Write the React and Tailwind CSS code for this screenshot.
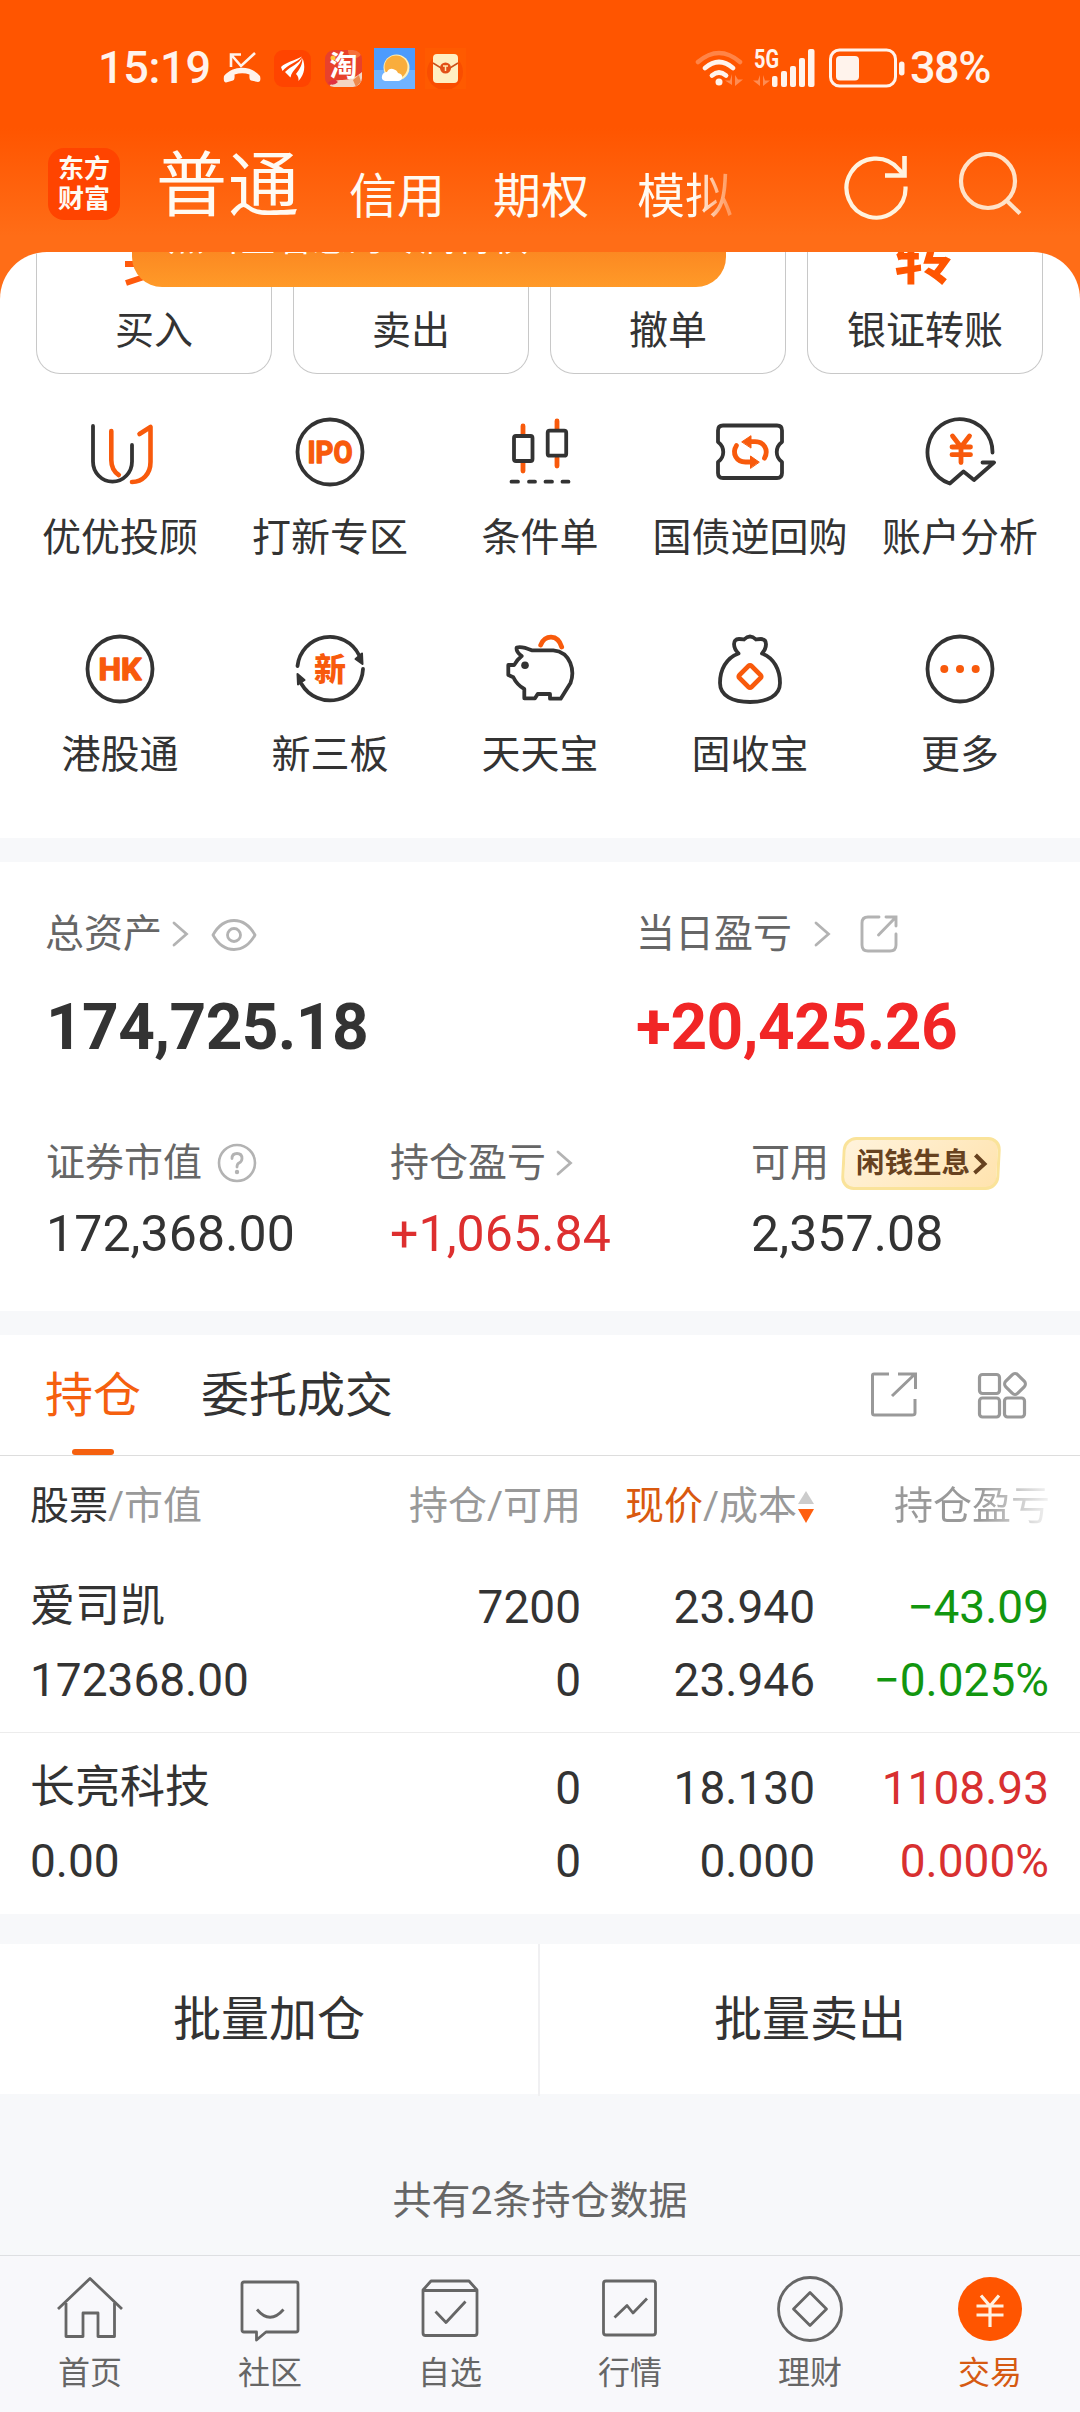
import React from "react";

const DARK = "#333333";
const ORANGE = "#f85a0c";

function Glyph({ children }) {
  return (
    <svg className="h-[72px] w-[72px]" viewBox="0 0 72 72" fill="none" stroke={DARK} strokeWidth="3.8" strokeLinecap="round" strokeLinejoin="round">
      {children}
    </svg>
  );
}

const AdvisorIcon = () => (
  <Glyph>
    <path d="M9 10V45.5a19.5 20.2 0 0 0 39 0V29" />
    <g stroke={ORANGE} strokeWidth="4.6">
      <path d="M27.3 15V44c0 7 3 12 7.5 15" />
      <path d="M55.5 18l11-7V46c0 12-8 20-18.5 20" />
    </g>
  </Glyph>
);

const IpoIcon = () => (
  <Glyph>
    <circle cx="36" cy="36" r="32.5" />
    <text x="13.5" y="47.3" textLength="45" lengthAdjust="spacingAndGlyphs" fill={ORANGE} stroke={ORANGE} strokeWidth="1.4" className="font-[Roboto] text-[31px] font-bold">IPO</text>
  </Glyph>
);

const CandleIcon = () => (
  <Glyph>
    <g stroke={ORANGE} strokeWidth="4.8">
      <path d="M19 10v8M19 47v8M53 5v8M53 42v8" />
    </g>
    <rect x="10" y="20" width="18.5" height="25" rx="2" />
    <rect x="43.7" y="14.7" width="18.5" height="25" rx="2" />
    <path d="M7.5 65.7H14M25 65.7H31M41.5 65.7H48M58.5 65.7H64.5" />
  </Glyph>
);

const TicketIcon = () => (
  <Glyph>
    <path d="M9 9.5H63q5 0 5 5V26c-7 5-7 15 0 20V57q0 5-5 5H9q-5 0-5-5V46c7-5 7-15 0-20V14.5q0-5 5-5z" />
    <g stroke={ORANGE} strokeWidth="4.8">
      <path d="M36 25.7h5c9 0 14 8 9.5 16.5" />
      <path d="M22.5 29.5c-5 8 0 16.5 9 16.5H37" />
    </g>
    <path d="M28 25.7l9-6v12zM45 46l-8.5-6v12z" fill={ORANGE} stroke={ORANGE} strokeWidth="1" />
  </Glyph>
);

const AnalysisIcon = () => (
  <Glyph>
    <path d="M68.5 36.5A32.5 33 0 1 0 25.8 67.5L39.5 55.5L50 64L70 46.5H58.5" />
    <path d="M28.5 20L37 31L45.5 20M37 31V46.5M28 31H46.5M28 38.7H46.5" stroke={ORANGE} strokeWidth="4.8" />
  </Glyph>
);

const HkIcon = () => (
  <Glyph>
    <circle cx="36" cy="36" r="32.5" />
    <text x="14.5" y="47" textLength="43" lengthAdjust="spacingAndGlyphs" fill={ORANGE} stroke={ORANGE} strokeWidth="1.4" className="font-[Roboto] text-[31px] font-bold">HK</text>
  </Glyph>
);

const NewBoardIcon = () => (
  <Glyph>
    <path d="M3.5 33A32.5 32.5 0 0 1 65 22M69 36A33 33 0 0 1 7.5 51" />
    <path d="M68.5 31L61.5 26L68 20.500zM3.500 41L10.500 47L4 51.500z" fill={DARK} strokeWidth="2" />
    <text x="36" y="47.5" textAnchor="middle" fill={ORANGE} stroke="none" className="font-['Noto_Sans_CJK_SC'] text-[32px] font-black">新</text>
  </Glyph>
);

const PiggyIcon = () => (
  <Glyph>
    <path d="M36.7 12c4-10.500 17-11 21 2" stroke={ORANGE} strokeWidth="4.8" />
    <path d="M12.7 14.5q-1 4 5 8.500q-5 4-7.500 9H4.3V42L9.3 44.3Q13 52 20.3 56V65.3H31L33.7 61H46V65.7H56.7L66.5 50C71 38 67 19 49.3 17.3H27.7Q18 13 12.7 14.5z" />
    <circle cx="21" cy="32.3" r="3.8" fill={DARK} stroke="none" />
  </Glyph>
);

const BagIcon = () => (
  <Glyph>
    <path d="M24.5 20.5C19 15 18 6 25 6q3 0 5 .5q6-6 12 0q2-.5 5-.5c7 0 6 9 1 14.500C60 25 66 37 66 50C66 63 53 69 36 69S6 63 6 50C6 37 12 25 24.5 20.5" />
    <rect x="27.5" y="35" width="17" height="17" rx="2" transform="rotate(45 36 43.5)" stroke={ORANGE} strokeWidth="4.8" />
  </Glyph>
);

const MoreIcon = () => (
  <Glyph>
    <circle cx="36" cy="36" r="32.5" />
    <g fill={ORANGE} stroke="none">
      <circle cx="20.3" cy="36" r="4" />
      <circle cx="36" cy="36" r="4" />
      <circle cx="51.7" cy="36" r="4" />
    </g>
  </Glyph>
);

const SHORTCUTS = [
  ["优优投顾", AdvisorIcon],
  ["打新专区", IpoIcon],
  ["条件单", CandleIcon],
  ["国债逆回购", TicketIcon],
  ["账户分析", AnalysisIcon],
  ["港股通", HkIcon],
  ["新三板", NewBoardIcon],
  ["天天宝", PiggyIcon],
  ["固收宝", BagIcon],
  ["更多", MoreIcon],
];

function StatusBar() {
  return (
    <div className="flex h-[136px] items-center pl-[98px] text-[#fff3ec]">
      <div className="w-[112px] whitespace-nowrap text-[45px] font-medium leading-[60px] tracking-[-0.3px]">15:19</div>
      <svg className="ml-[12px] h-[38px] w-[40px]" viewBox="0 0 40 38" fill="none">
        <path d="M9 18V5.5H19M9 5.5L19 17L33 4" stroke="currentColor" strokeWidth="2.6" />
        <path d="M2 27c9-11 27-11 36 0c1 4 0 6-2 6l-7-1.500q-2-.5-1.500-6q-7-2.500-15 0q.5 5.500-1.500 6L4 33.500q-3 0-2-6.500z" fill="currentColor" />
      </svg>
      <svg className="ml-[12px] h-[37px] w-[37px]" viewBox="0 0 37 37">
        <rect width="37" height="37" rx="9" fill="#ff4400" />
        <path d="M7 17C12 12 20 11 28 6.500C23 13 14 14 8.500 21zM11 22C17 16 25 14 28 7.500C27 16 18 19 16.500 27.500zM28.500 8C31.500 16 31 24 24.500 31Q25 27 22 24C26 19 28.500 14 28.500 8z" fill="#fff" />
      </svg>
      <svg className="ml-[14px] h-[37px] w-[37px]" viewBox="0 0 37 37">
        <clipPath id="tao"><rect width="37" height="37" rx="9" /></clipPath>
        <g clipPath="url(#tao)">
          <rect width="37" height="37" fill="#e8412c" />
          <circle cx="30" cy="1" r="7" fill="#f5713c" />
          <path d="M4 37q4-7 11-7q12 1 22-8V37z" fill="#f3d6c3" />
          <path d="M3 33q5-6 10-1q-5 5-10 1z" fill="#e03040" />
          <path d="M28 30l6-5 2 7-5 5z" fill="#ee8a4c" />
          <circle cx="8" cy="8" r="2.5" fill="#ffc53c" />
          <text x="4.5" y="25.5" fill="#fff" className="font-['Noto_Sans_CJK_SC'] text-[28px] font-bold">淘</text>
        </g>
      </svg>
      <svg className="ml-[12px] h-[41px] w-[41px]" viewBox="0 0 41 41">
        <rect width="41" height="41" fill="#4c9bfd" />
        <rect y="22" width="41" height="19" fill="#70b3ff" />
        <circle cx="22.5" cy="19.5" r="13" fill="#fff0b8" />
        <circle cx="22" cy="19" r="11.5" fill="#f9ad3c" />
        <path d="M11 33q-4-1-3-5t5-4q2-4 6-3t5 4q5 1 4 5q-1 3-4 3z" fill="#fff" />
      </svg>
      <svg className="ml-[10px] h-[41px] w-[41px]" viewBox="0 0 41 41">
        <rect width="41" height="41" fill="#ff5a00" />
        <circle cx="20" cy="24" r="18" fill="#f94d00" />
        <rect x="8" y="6" width="25" height="29" rx="4" fill="#ffefc2" />
        <path d="M8 15L16 20H25L33 15" stroke="#c9501a" strokeWidth="1.5" fill="none" />
        <circle cx="20.5" cy="20" r="5.5" fill="#e25018" />
        <path d="M18 18h5M20.5 18v5" stroke="#ffe9b0" strokeWidth="1.5" />
      </svg>
      <div className="flex-1" />
      <svg className="h-[40px] w-[48px]" viewBox="0 0 48 40" fill="none" stroke="currentColor" strokeWidth="5" strokeLinecap="round">
        <path d="M3 14Q24-4 45 14" opacity=".3" strokeWidth="4.5" />
        <path d="M10 20Q24 8 38 20M17 27.500Q24 21.500 31 27.500" strokeWidth="4.8" />
        <circle cx="24" cy="34" r="3.5" fill="currentColor" stroke="none" />
        <path d="M37 26V37L30 32.500H35zM40 27V38L48 31.500H43z" fill="currentColor" stroke="none" opacity=".35" />
      </svg>
      <svg className="ml-[9px] h-[40px] w-[64px] overflow-visible" viewBox="0 0 64 40" fill="currentColor">
        <text x="2" y="20" textLength="25" lengthAdjust="spacingAndGlyphs" className="font-[Roboto] text-[25px] font-bold">5G</text>
        <path d="M8 27V38L1 32.500H6zM11 27V38L18 32.500H13z" opacity=".35" />
        <rect x="20" y="28" width="5.5" height="11" rx="2" />
        <rect x="29" y="23" width="6" height="16" rx="2" />
        <rect x="38" y="18" width="6" height="21" rx="2" />
        <rect x="47" y="10" width="6" height="29" rx="2" />
        <rect x="56" y="1" width="6.5" height="38" rx="2" />
      </svg>
      <svg className="ml-[13px] h-[40px] w-[77px]" viewBox="0 0 77 40" fill="none">
        <rect x="1.5" y="2" width="65" height="36" rx="9" stroke="currentColor" strokeWidth="3" />
        <rect x="7" y="8" width="23" height="24.5" rx="4" fill="currentColor" />
        <rect x="70" y="13.5" width="5.5" height="14" rx="2.7" fill="currentColor" />
      </svg>
      <div className="ml-[4px] w-[170px] whitespace-nowrap text-[45px] font-medium leading-[60px] tracking-[-1.5px]">38%</div>
    </div>
  );
}

function Header() {
  return (
    <header className="h-[252px] shrink-0 bg-[linear-gradient(180deg,#ff5500_0px,#ff5500_128px,#ff6d17_236px,#ff6d17_252px)]">
      <StatusBar />
      <div className="flex h-[116px] items-start pl-[48px] text-[#fffaf2]">
        <div className="mt-[12px] grid h-[72px] w-[72px] grid-cols-[26px_26px] content-center justify-center gap-y-0 rounded-[16px] bg-[#ff4400] text-center text-[26px] font-bold leading-[30px]">
          <span>东</span><span>方</span><span>财</span><span>富</span>
        </div>
        <div className="flex whitespace-nowrap">
          <span className="ml-[36px] pt-px text-[71px] leading-[98px] tracking-[1px]">普通</span>
          <span className="ml-[49px] pt-[12px] text-[48px] leading-[98px]">信用</span>
          <span className="ml-[48px] pt-[12px] text-[48px] leading-[98px]">期权</span>
          <span className="ml-[48px] bg-[linear-gradient(90deg,#fffaf2_60%,#ff9a60_95%)] bg-clip-text pt-[12px] text-[48px] leading-[98px] text-transparent">模拟</span>
        </div>
        <svg className="ml-[111px] mt-[18px] h-[66px] w-[66px]" viewBox="0 0 66 66" fill="none" stroke="#fff3df" strokeWidth="4.2">
          <path d="M61.5 32.5A29.5 29.5 0 1 1 54.5 15L60 21" />
          <path d="M60.5 2V21.5H41" strokeWidth="4.6" />
        </svg>
        <svg className="ml-[48px] mt-[16px] h-[66px] w-[66px]" viewBox="0 0 66 66" fill="none" stroke="#ffe2c8" strokeWidth="4.2">
          <circle cx="30" cy="29" r="27" />
          <path d="M48.5 48.5L62 61.5" />
        </svg>
      </div>
    </header>
  );
}

function TradeCards() {
  return (
    <div className="relative flex h-[122px] shrink-0 gap-[21px] overflow-hidden rounded-t-[47px] bg-white px-[36px] text-[39px] text-[#333]">
      {["买入", "卖出", "撤单", "银证转账"].map((t, i) => (
        <div key={t} className="relative flex h-[122px] w-[236px] shrink-0 items-end justify-center rounded-b-[24px] border border-t-0 border-[#c8c8c8] pb-[12px] leading-[60px]">
          {i === 3 && <div className="absolute left-[86px] top-[-25px] text-[60px] font-bold leading-[64px] text-[#ff5500]">转</div>}
          {i === 0 && (
            <svg className="absolute left-[86px] top-[5px] h-[36px] w-[30px]" viewBox="0 0 30 36" stroke="#ff5a0c" strokeWidth="6">
              <path d="M2 7H28M3 26L24 19" />
            </svg>
          )}
          {t}
        </div>
      ))}
      <div className="absolute left-[132px] top-[-40px] h-[75px] w-[594px] rounded-[30px] bg-[linear-gradient(180deg,#fb8420_40%,#ff9a28)] pl-[36px] text-[36px] leading-[54px] text-white">点击查看您的专属特权</div>
    </div>
  );
}

const Chevron = ({ className }) => (
  <svg className={className} width="17" height="26" viewBox="0 0 17 26" fill="none" stroke="#b3b3b3" strokeWidth="2.8" strokeLinecap="round">
    <path d="M2 2L14.5 13L2 24" />
  </svg>
);

function Assets() {
  return (
    <section className="h-[449px] shrink-0 bg-white text-[#666]">
      <div className="grid h-[145px] grid-cols-[591px_1fr] pl-[45px] pt-[42px] text-[39px]">
        <div className="flex h-[60px] items-center">
          总资产
          <Chevron className="ml-[10px]" />
          <svg className="ml-[22px] mt-[2px] h-[34px] w-[46px]" viewBox="0 0 46 34" fill="none" stroke="#b3b3b3" strokeWidth="2.8">
            <path d="M2 17Q10 2.500 23 2.500T44 17Q36 31.500 23 31.500T2 17z" strokeLinejoin="round" />
            <circle cx="23" cy="17" r="6.5" />
          </svg>
        </div>
        <div className="flex h-[60px] items-center">
          当日盈亏
          <Chevron className="ml-[22px]" />
          <svg className="ml-[28px] h-[40px] w-[40px]" viewBox="0 0 40 40" fill="none" stroke="#b3b3b3" strokeWidth="2.9" strokeLinecap="round">
            <path d="M20 3H9Q3 3 3 9V31Q3 37 9 37H31Q37 37 37 31V20M27 3H37V12M36 4L19.5 21" />
          </svg>
        </div>
      </div>
      <div className="grid h-[126px] grid-cols-[590px_1fr] pl-[46px] pt-px text-[64px] font-bold leading-[40px]">
        <div className="tracking-[-0.6px] text-[#333]">174,725.18</div>
        <div className="tracking-[-0.5px] text-[#f12626]">+20,425.26</div>
      </div>
      <div className="grid grid-cols-[344px_361px_1fr] pl-[46px] text-[39px]">
        <div className="flex h-[60px] items-center">
          证券市值
          <svg className="ml-[14px] h-[42px] w-[42px]" viewBox="0 0 42 42" fill="none" stroke="#b3b3b3" strokeWidth="2.6" strokeLinecap="round">
            <circle cx="21" cy="21" r="18" />
            <path d="M16 16.500q0-5 5-5t5 5q0 3-3 4.500q-2 1-2 4" strokeWidth="2.8" />
            <circle cx="21" cy="30" r="2.2" fill="#b3b3b3" stroke="none" />
          </svg>
        </div>
        <div className="flex h-[60px] items-center">持仓盈亏<Chevron className="ml-[10px]" /></div>
        <div className="flex h-[60px] items-center">
          可用
          <div className="ml-[13px] flex h-[53px] w-[158px] -skew-x-3 items-center rounded-[13px] border-[3px] border-[#fae39a] bg-[linear-gradient(135deg,#fff3dc,#ffe3ae)] pl-[11px] text-[#67421f]">
            <span className="skew-x-3 text-[28.5px] font-bold leading-[40px]">闲钱生息</span>
            <svg className="ml-[3px] h-[22px] w-[15px]" viewBox="0 0 15 22" fill="none" stroke="currentColor" strokeWidth="4"><path d="M2 2L11.5 11L2 20" /></svg>
          </div>
        </div>
      </div>
      <div className="grid grid-cols-[344px_361px_1fr] pl-[46px] pt-[11px] text-[50px] leading-[60px]">
        <div className="tracking-[0.1px] text-[#333]">172,368.00</div>
        <div className="tracking-[0.1px] text-[#dd2f2f]">+1,065.84</div>
        <div className="tracking-[0.1px] text-[#333]">2,357.08</div>
      </div>
    </section>
  );
}

const COLS = "grid grid-cols-[341px_210px_234px_234px] pl-[30px]";

function HoldingRow({ name, value, qty, avail, price, cost, pl, pct, tone, last }) {
  return (
    <div className={`h-[181px] pt-[23px] text-[46px] leading-[64px] text-[#333] ${last ? "" : "border-b border-[#ececec]"}`}>
      <div className={COLS}>
        <div className="text-[45px]">{name}</div>
        <div className="text-right">{qty}</div>
        <div className="text-right">{price}</div>
        <div className={`text-right ${tone}`}>{pl}</div>
      </div>
      <div className={`${COLS} pt-[9px]`}>
        <div>{value}</div>
        <div className="text-right">{avail}</div>
        <div className="text-right">{cost}</div>
        <div className={`text-right ${tone}`}>{pct}</div>
      </div>
    </div>
  );
}

function Holdings() {
  return (
    <section className="h-[579px] shrink-0 bg-white">
      <div className="flex h-[121px] border-b border-[#dddddd] pl-[45px] text-[48px] leading-[122px]">
        <div className="relative text-[#f5600f]">
          持仓
          <div className="absolute bottom-0 left-[27px] h-[6px] w-[42px] rounded-full bg-[#f5600f]" />
        </div>
        <div className="ml-[60px] text-[#333]">委托成交</div>
        <svg className="ml-[476px] mt-[35px] h-[50px] w-[50px]" viewBox="0 0 50 50" fill="none" stroke="#999" strokeWidth="3">
          <path d="M20 4H5Q3.500 4 3.500 5.500V43Q3.500 45 5.500 45H43Q46 45 46 43V29M29 4H46.500V19M46 4L23 26" />
        </svg>
        <svg className="ml-[58px] mt-[36px] h-[50px] w-[50px]" viewBox="0 0 50 50" fill="none" stroke="#999" strokeWidth="3.2">
          <rect x="2.5" y="3.5" width="20" height="19" rx="3" />
          <rect x="2.5" y="27" width="20" height="19" rx="3" />
          <rect x="27.5" y="27" width="20" height="19" rx="3" />
          <rect x="29.5" y="4.5" width="17" height="17" rx="4" transform="rotate(45 38 13)" />
        </svg>
      </div>
      <div className={`${COLS} h-[96px] text-[39px] leading-[100px] text-[#999]`}>
        <div><span className="text-[#333]">股票</span>/市值</div>
        <div className="text-right">持仓/可用</div>
        <div className="flex justify-end whitespace-nowrap">
          <span className="text-[#d9590f]">现价</span>/成本
          <svg className="mt-[35px] h-[32px] w-[18px]" viewBox="0 0 18 32">
            <path d="M9 0L17 13H1z" fill="#ccc" />
            <path d="M9 32L17 18H1z" fill="#ff5f0f" />
          </svg>
        </div>
        <div className="pl-[79px]">
          <span className="whitespace-nowrap bg-[linear-gradient(90deg,#999_55%,#f4f4f4_100%)] bg-clip-text text-transparent">持仓盈亏</span>
        </div>
      </div>
      <HoldingRow name="爱司凯" value="172368.00" qty="7200" avail="0" price="23.940" cost="23.946" pl="−43.09" pct="−0.025%" tone="text-[#12960f]" />
      <HoldingRow name="长亮科技" value="0.00" qty="0" avail="0" price="18.130" cost="0.000" pl="1108.93" pct="0.000%" tone="text-[#d83030]" last />
    </section>
  );
}

const NAV = [
  ["首页", <><path d="M4 35L36 4.500L68 35" /><path d="M12 29V62.500H29V39H44V62.500H60.500V29" /></>],
  ["社区", <><path d="M10 8H62Q64 8 64 10V56Q64 58 62 58H32L22.500 66V58H10Q8 58 8 56V10Q8 8 10 8z" /><path d="M23 35.500Q36 51 49.500 35.500" /></>],
  ["自选", <><path d="M9 16L17 7H55L63 16V59Q63 61.500 60.500 61.500H11.500Q9 61.500 9 59zM9 16.500H63" /><path d="M21.500 37.500L32 48.500L51.500 27.500" /></>],
  ["行情", <><rect x="9.5" y="7" width="52" height="54" rx="2.5" /><path d="M20.500 43.500L33 31.500L39 39L53 24.500" /></>],
  ["理财", <><circle cx="36" cy="35" r="31.5" /><path d="M36 18.500L52.500 35L36 51.500L19.500 35z" /></>],
];

function BottomNav() {
  return (
    <nav className="grid h-[157px] shrink-0 grid-cols-6 border-t border-[#dedfe2] bg-[#f8f8fb] text-[32px] text-[#666]">
      {NAV.map(([label, art]) => (
        <div key={label} className="flex flex-col items-center pt-[18px] leading-[50px]">
          <svg className="h-[72px] w-[72px]" viewBox="0 0 72 72" fill="none" stroke="#666" strokeWidth="2.8" strokeLinejoin="round">{art}</svg>
          <span className="pt-[2px]">{label}</span>
        </div>
      ))}
      <div className="flex flex-col items-center pt-[18px] leading-[50px] text-[#d65a12]">
        <svg className="h-[72px] w-[72px]" viewBox="0 0 72 72" fill="none" stroke="#fff1e0" strokeWidth="3.2">
          <circle cx="36" cy="35" r="32" fill="#ff5500" stroke="none" />
          <path d="M27 21.500L36 32L45 21.500M36 31V53M22.500 32H49.500M22.500 41H49.500" />
        </svg>
        <span className="pt-[2px]">交易</span>
      </div>
    </nav>
  );
}

export default function App() {
  return (
    <div className="flex h-[2412px] w-[1080px] flex-col overflow-hidden bg-[#f7f8fa] font-[Roboto,'Noto_Sans_CJK_SC',sans-serif]">
      <Header />
      <div className="shrink-0 bg-[#ff6d17]"><TradeCards /></div>
      <div className="grid h-[464px] shrink-0 grid-cols-5 content-start bg-white px-[15px] pt-[42px] text-[39px] text-[#333]">
        {SHORTCUTS.map(([label, Icon]) => (
          <div key={label} className="flex h-[217px] flex-col items-center whitespace-nowrap leading-[60px]">
            <Icon />
            <span className="pt-[20px]">{label}</span>
          </div>
        ))}
      </div>
      <div className="h-[24px] shrink-0" />
      <Assets />
      <div className="h-[24px] shrink-0" />
      <Holdings />
      <div className="mt-[30px] grid h-[150px] shrink-0 grid-cols-2 bg-white text-center text-[48px] leading-[152px] text-[#333]">
        <div className="border-r-2 border-[#f0f0f2]">批量加仓</div>
        <div>批量卖出</div>
      </div>
      <div className="flex-1 pt-[77px] text-center text-[39px] leading-[60px] text-[#666]">共有2条持仓数据</div>
      <BottomNav />
    </div>
  );
}
